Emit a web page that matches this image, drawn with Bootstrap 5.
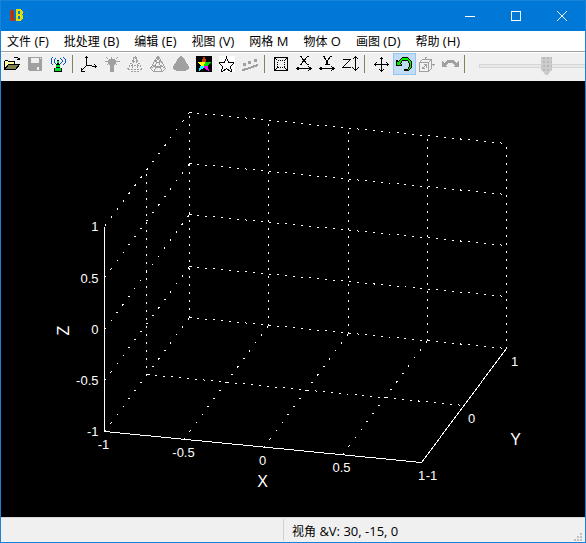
<!DOCTYPE html>
<html lang="zh-CN">
<head>
<meta charset="utf-8">
<meta name="viewport" content="width=device-width, initial-scale=1">
<title>LB</title>
<link href="https://cdn.jsdelivr.net/npm/bootstrap@5.3.0/dist/css/bootstrap.min.css" rel="stylesheet">
<style>
  body { font-family: "Open Sans", "Noto Sans CJK SC", sans-serif; font-size: 12px; line-height: 18px; color: #000; }
  .latin { font-size: 13px; }
  .app-window { border: 1px solid #1883d7; background: #f0f0f0; }
  .title-strip { background: #0078d7; height: 30px; }
  .win-btn { width: 46px; height: 29px; border: 0; padding: 0; background: transparent; color: #fff; display: flex; align-items: center; justify-content: center; }
  .menu-strip { background: #fff; height: 20px; padding-left: 6px; gap: 15px; }
  .menu-strip a { color: #000; text-decoration: none; white-space: nowrap; }
  .tool-strip { height: 30px; border-top: 1px solid #a0a0a0; box-shadow: inset 0 1px #fff; padding-bottom: 5px; }
  .tool-btn { width: 23px; height: 22px; flex: none; border: 0; padding: 0 1px 0 0; background: transparent; display: flex; align-items: center; justify-content: center; }
  .tool-btn.pressed { background: #c1dcf3; border: 1px solid #90c8f6; padding: 0; }
  .tool-sep { width: 8px; flex: none; padding-left: 2px; }
  .tool-sep::before { content: ""; display: block; width: 1px; height: 18px; background: #85825a; }
  svg { display: block; shape-rendering: crispEdges; fill: none; stroke: #000; }
  .dim { stroke: #a0a0a0; }
  .zoom-range { appearance: none; -webkit-appearance: none; width: 135px; height: 22px; flex: none; margin: 3px 0 0 9px; background: transparent; }
  .zoom-range::-webkit-slider-runnable-track { height: 4px; border: 1px solid #d6d6d6; background: #e7eaea; }
  .zoom-range::-webkit-slider-thumb { -webkit-appearance: none; width: 11px; height: 19px; margin-top: -8px; background: radial-gradient(circle at 1px 1px, #b8b8b8 1px, transparent 1px) 2px 4px / 4px 4px #ccc; clip-path: polygon(0 0, 100% 0, 100% 70%, 50% 100%, 0 70%); }
  .plot-area { background: #000; min-height: 0; }
  .plot-area svg { stroke: #fff; }
  .plot-area text { font-family: "Liberation Sans", Arial, sans-serif; font-size: 13px; fill: #fff; stroke: none; }
  .plot-area .axis-name { font-size: 16px; }
  .wall { stroke-dasharray: 2 6; }
  .slant { stroke-dasharray: 2 8; }
  .status-strip { height: 25px; border-top: 1px solid #d7d7d7; }
  .status-pane { flex: 0 0 283px; border-right: 1px solid #d0d0d0; margin: 1px 0; }
</style>
<script src="https://cdn.jsdelivr.net/npm/bootstrap@5.3.0/dist/js/bootstrap.bundle.min.js"></script>
</head>
<body>
<div class="app-window d-flex flex-column vh-100 overflow-hidden">
  <header class="title-strip d-flex align-items-start flex-shrink-0">
    <svg class="ms-2 mt-2" width="16" height="14" viewBox="0 0 16 14">
      <path d="M1 1h2v11H1zM4 1h1v11H4zM3 10h3v2H3z" fill="#b83a14" stroke="none"/>
      <path d="M3 1h1v9H3zM5 9h1v1H5z" fill="#7c3a3c" stroke="none"/>
      <path d="M7 0h5v1h1v1h1v3h-1v1h1v4h-1v1h-1v1H7zM9 2v3h2V2zM9 7v3h2V7z" fill="#e0e000" fill-rule="evenodd" stroke="none"/>
    </svg>
    <div class="d-flex ms-auto">
      <button class="win-btn" type="button" aria-label="最小化"><svg width="10" height="10"><path d="M0 5.5h10" stroke="#fff"/></svg></button>
      <button class="win-btn" type="button" aria-label="最大化"><svg width="10" height="10"><path d="M.5.5h9v9h-9z" stroke="#fff"/></svg></button>
      <button class="win-btn" type="button" aria-label="关闭"><svg width="10" height="10"><path d="M0 0l10 10M10 0L0 10" stroke="#fff" shape-rendering="geometricPrecision"/></svg></button>
    </div>
  </header>

  <nav class="menu-strip d-flex align-items-center flex-shrink-0" aria-label="菜单">
    <a href="#">文件<span class="latin"> (F)</span></a>
    <a href="#">批处理<span class="latin"> (B)</span></a>
    <a href="#">编辑<span class="latin"> (E)</span></a>
    <a href="#">视图<span class="latin"> (V)</span></a>
    <a href="#">网格<span class="latin"> M</span></a>
    <a href="#">物体<span class="latin"> O</span></a>
    <a href="#">画图<span class="latin"> (D)</span></a>
    <a href="#">帮助<span class="latin"> (H)</span></a>
  </nav>

  <div class="tool-strip d-flex align-items-center flex-shrink-0 overflow-hidden" role="toolbar" aria-label="工具栏">
    <button class="tool-btn" type="button" aria-label="打开">
      <svg width="16" height="16" viewBox="-.5 -.5 16 16"><path d="M0 13V5l1-1h2l1 1h6v3" fill="#ffff9c"/><path d="M0 13L4 8h11l-4 5z" fill="#808050"/><path d="M9 2l1-1h3l1 1v1M12 3h3M15 1v2"/></svg></button>
    <button class="tool-btn" type="button" disabled aria-label="保存">
      <svg width="16" height="16"><path d="M1 1h14v14H2l-1-1z" fill="#a0a0a0" stroke="none"/><path d="M4 2h8v5H4zM10 11h2v3h-2zM13 2h1v1h-1z" fill="#f0f0f0" stroke="none"/></svg></button>
    <button class="tool-btn" type="button" aria-label="发射">
      <svg width="16" height="16"><path d="M3 1L1 3v4l2 2M6 2L4 4v2l2 2M13 1l2 2v4l-2 2M10 2l2 2v2l-2 2" stroke="#0a50c8"/><path d="M7 4h2v4h1v4h2v4H4v-4h2V8h1z" fill="#000" stroke="none"/><path d="M7 5h2v2H7zM6 9h4v2H6zM5 12h6v3H5z" fill="#00e030" stroke="none"/></svg></button>
    <span class="tool-sep"></span>
    <button class="tool-btn" type="button" aria-label="坐标轴">
      <svg width="16" height="16" viewBox="-.5 -.5 16 16"><path d="M5 0v9l10 1M5 9l-5 5M3 2l2-2 2 2M13 8l2 2-2 2M0 11v4h3"/></svg></button>
    <button class="tool-btn" type="button" disabled aria-label="光照">
      <svg class="dim" width="16" height="16" viewBox="-.5 -.5 16 16"><path d="M5 3h5l1 1v3l-2 2v6H6V9L4 7V4z" fill="#a0a0a0"/><path d="M7 0v2M2 1l2 2M13 1l-2 2M0 5h4M11 5h4M2 9l2-2M13 9l-2-2"/></svg></button>
    <button class="tool-btn" type="button" disabled aria-label="隐线">
      <svg class="dim" width="16" height="16" viewBox="-.5 -.5 16 16"><path stroke-dasharray="2 1" d="M7 0h1M7 1L0 13M8 1l7 12M6 1L5 14M9 1l1 13M5 5h6M3 9h10M0 13h15M3 15h9"/></svg></button>
    <button class="tool-btn" type="button" disabled aria-label="线框">
      <svg class="dim" width="16" height="16" viewBox="-.5 -.5 16 16"><path d="M7 0h1l3 5 4 7-3 3H3l-3-3 4-7zM7 1L4 15M8 1l3 14M5 5l1 1h3l1-1M3 9l2 1h5l2-1M0 12l3-2 5 1 4-1 3 2"/></svg></button>
    <button class="tool-btn" type="button" disabled aria-label="实体">
      <svg width="16" height="16"><path d="M7 0h2l3 4 4 7v2l-4 2H4l-4-2v-2l4-7z" fill="#a0a0a0" stroke="none"/></svg></button>
    <button class="tool-btn" type="button" aria-label="着色">
      <svg width="16" height="16"><path d="M0 0h16v16H0z" fill="#000" stroke="none"/><path d="M8 1l2 5H6z" fill="#c04010" stroke="#c04010"/><path d="M1 6h8v4H5z" fill="#ff0" stroke="none"/><path d="M9 6h6l-4 4H8z" fill="#00e000" stroke="none"/><path d="M4 10h4v2l-5 3z" fill="#0ff" stroke="none"/><path d="M8 10h4l1 5-5-3z" fill="#f0f" stroke="none"/></svg></button>
    <button class="tool-btn" type="button" aria-label="轮廓">
      <svg width="16" height="16" viewBox="-.5 -.5 16 16"><path d="M-.5-.5h16v16h-16z" fill="#fff" stroke="none"/><path d="M7 1l2 5h5v1l-3 3 1 5h-1l-4-3-4 3H2l1-5-3-3V6h5z"/></svg></button>
    <button class="tool-btn" type="button" disabled aria-label="散点">
      <svg width="16" height="16"><path d="M1 7h3v3H1zM6 5h3v3H6zM12 3h3v3h-3z" fill="#a0a0a0" stroke="none"/><path d="M0 14l5-1 5-2 6-2" class="dim" stroke-width="2"/></svg></button>
    <span class="tool-sep"></span>
    <button class="tool-btn" type="button" aria-label="全部">
      <svg width="16" height="16" viewBox="-.5 -.5 16 16"><path d="M1 1h13v13H1zM1 1l3 3M14 1l-3 3M1 14l3-3M14 14l-3-3"/><path d="M4 4h7v7H4z" stroke-dasharray="1 1"/></svg></button>
    <button class="tool-btn" type="button" aria-label="X 方向">
      <svg width="16" height="16" viewBox="-.5 -.5 16 16"><path d="M3 0h2M10 0h2M4 0l7 8M11 0L4 8M3 8h2M10 8h2M0 12h15M3 10l-3 2 3 2M12 10l3 2-3 2"/></svg></button>
    <button class="tool-btn" type="button" aria-label="Y 方向">
      <svg width="16" height="16" viewBox="-.5 -.5 16 16"><path d="M3 0h2M10 0h2M4 0l3 4v4M11 0L8 4v4M5 8h5M0 12h15M3 10l-3 2 3 2M12 10l3 2-3 2"/></svg></button>
    <button class="tool-btn" type="button" aria-label="Z 方向">
      <svg width="17" height="16" viewBox="-.5 -.5 17 16"><path d="M0 3h8L0 11h8M13 0v14M10 3l3-3 3 3M10 11l3 3 3-3"/></svg></button>
    <span class="tool-sep"></span>
    <button class="tool-btn" type="button" aria-label="移动">
      <svg width="15" height="15" viewBox="-.5 -.5 15 15"><path d="M7 0v14M0 7h14M5 2l2-2 2 2M5 12l2 2 2-2M2 5L0 7l2 2M12 5l2 2-2 2"/></svg></button>
    <button class="tool-btn pressed" type="button" aria-pressed="true" aria-label="旋转">
      <svg width="17" height="16" viewBox="-.5 -.5 17 16"><path d="M0 4v5h5V8L4 7l2-3h5l2 3v3l-2 3H8v1h4l3-3V5l-4-4H6L3 4 2 5z" fill="#0e0"/></svg></button>
    <button class="tool-btn" type="button" disabled aria-label="立体">
      <svg class="dim" width="16" height="16" viewBox="-.5 -.5 16 16"><path d="M0 6h9v9H0zM0 6l3-3h9L9 6M12 3v9l-3 3M6 3V0M5 1h2M12 8h3M14 7v2M3 12l4-4M4 8h3v3M3 10v2h2"/></svg></button>
    <button class="tool-btn" type="button" disabled aria-label="翻转">
      <svg width="17" height="16"><path d="M0 5l2 2 3-3h6l3 3 3-2v6h-5l1-2-3-2H7L4 9l1 2H0z" fill="#a0a0a0" stroke="none"/></svg></button>
    <span class="tool-sep"></span>
    <input class="zoom-range" type="range" min="0" max="100" value="50" disabled aria-label="缩放">
  </div>

  <main class="plot-area flex-grow-1">
    <svg width="100%" height="100%" viewBox="0.5 80.5 584 436" role="img" aria-label="三维坐标图">
      <g class="wall">
        <path d="M189 112L506 143M189 163L506 194M189 214L506 245M189 266L506 296M189 317L506 348M147 374L464 405"/>
        <path d="M146 375V169M189 317V112M268 325V120M348 333V127M427 340V135M506 348V143"/>
      </g>
      <path class="slant" d="M189 112L104 226M104 277L189 163M104 329L189 214M104 380L189 266M104 431L189 317M183 439L268 325M263 447L348 333M342 454L427 340"/>
      <path d="M104 226V431L421 462L506 348"/>
      <g text-anchor="end">
        <text x="98" y="230">1</text><text x="98" y="282">0.5</text><text x="98" y="333">0</text><text x="98" y="384">-0.5</text><text x="98" y="435">-1</text>
      </g>
      <g text-anchor="middle">
        <text x="103" y="448">-1</text><text x="183" y="456">-0.5</text><text x="262" y="464">0</text><text x="341" y="471">0.5</text><text x="421" y="479">1</text>
        <text x="431" y="479">-1</text><text x="471" y="422">0</text><text x="514" y="365">1</text>
        <text class="axis-name" x="262" y="486">X</text><text class="axis-name" x="515" y="444">Y</text>
        <text class="axis-name" transform="translate(68 330) rotate(-90)">Z</text>
      </g>
    </svg>
  </main>

  <footer class="status-strip d-flex flex-shrink-0">
    <div class="status-pane"></div>
    <div class="flex-grow-1 ps-2 pt-1">视角<span class="latin"> &amp;V: 30, -15, 0</span></div>
    <svg class="align-self-end" width="12" height="10"><path d="M7 1h2v2H7zM4 4h2v2H4zM7 4h2v2H7zM1 7h2v2H1zM4 7h2v2H4zM7 7h2v2H7z" fill="#bfbfbf" stroke="none"/></svg>
  </footer>
</div>
</body>
</html>
